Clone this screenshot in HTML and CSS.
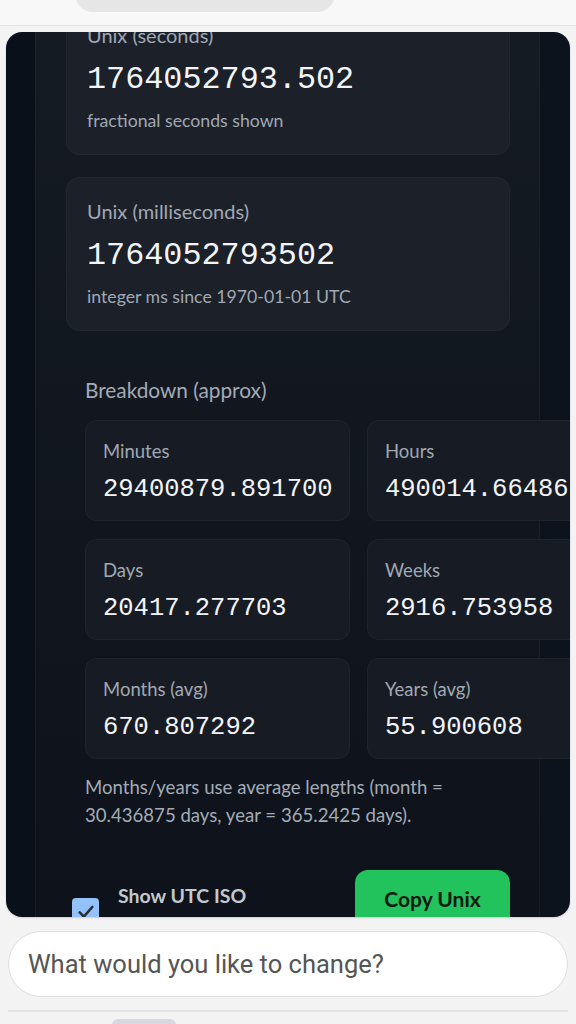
FILE: index.html
```html
<!DOCTYPE html>
<html lang="en">
<head>
<meta charset="utf-8">
<meta name="viewport" content="width=576">
<title>Unix time</title>
<link rel="stylesheet" href="styles.css">
</head>
<body>
<header class="topbar"><div class="topbar-pill"></div></header>
<main class="stage">
  <div class="frame">
    <div class="panel">
      <div class="scroll">
        <section class="card first">
          <div class="card-label">Unix (seconds)</div>
          <div class="card-value">1764052793.502</div>
          <div class="card-sub">fractional seconds shown</div>
        </section>
        <section class="card">
          <div class="card-label">Unix (milliseconds)</div>
          <div class="card-value">1764052793502</div>
          <div class="card-sub">integer ms since 1970-01-01 UTC</div>
        </section>
        <section class="breakdown">
          <h2 class="breakdown-title">Breakdown (approx)</h2>
          <div class="grid">
            <div class="stat"><div class="stat-label">Minutes</div><div class="stat-value">29400879.891700</div></div>
            <div class="stat"><div class="stat-label">Hours</div><div class="stat-value">490014.664862</div></div>
            <div class="stat"><div class="stat-label">Days</div><div class="stat-value">20417.277703</div></div>
            <div class="stat"><div class="stat-label">Weeks</div><div class="stat-value">2916.753958</div></div>
            <div class="stat"><div class="stat-label">Months (avg)</div><div class="stat-value">670.807292</div></div>
            <div class="stat"><div class="stat-label">Years (avg)</div><div class="stat-value">55.900608</div></div>
          </div>
          <p class="note">Months/years use average lengths (month = 30.436875 days, year = 365.2425 days).</p>
        </section>
        <div class="actions">
          <label class="toggle">
            <span class="checkbox"><svg viewBox="0 0 24 24" width="20" height="20"><path d="M4.5 12.5l5 5L19.5 6" fill="none" stroke="#2b2f36" stroke-width="3.2" stroke-linecap="round" stroke-linejoin="round"/></svg></span>
            <span class="toggle-text">Show UTC ISO</span>
          </label>
          <button class="copy-btn">Copy Unix (s)</button>
        </div>
      </div>
    </div>
  </div>
</main>
<footer class="composer">
  <div class="composer-input">What would you like to change?</div>
  <div class="composer-bar"><div class="composer-pill"></div></div>
</footer>
</body>
</html>
```
FILE: styles.css
```css
* { box-sizing: border-box; }
html, body { margin: 0; padding: 0; }
body {
  width: 576px;
  height: 1024px;
  overflow: hidden;
  background: #f3f3f3;
  font-family: "Lato", "Noto Sans", sans-serif;
  display: flex;
  flex-direction: column;
}
.topbar {
  height: 26px;
  background: #f8f8f8;
  border-bottom: 1px solid #e4e4e4;
  position: relative;
  overflow: hidden;
  flex: none;
}
.topbar-pill {
  position: absolute;
  left: 75px;
  top: -30px;
  width: 260px;
  height: 42px;
  border-radius: 18px;
  background: #e6e6e6;
}
.stage {
  padding: 6px 6px 0;
  flex: none;
}
.frame {
  height: 885px;
  border-radius: 16px;
  overflow: hidden;
  background: linear-gradient(90deg, #0a1019 0%, #0d131c 100%);
  box-shadow: 0 1px 2px rgba(0,0,0,0.15);
}
.panel {
  margin-left: 29px;
  width: 505px;
  height: 100%;
  background: linear-gradient(180deg, #151b23 0%, #11161e 60%, #0e131b 100%);
  border-left: 1px solid rgba(255,255,255,0.045);
  border-right: 1px solid rgba(255,255,255,0.045);
}
.scroll {
  padding: 0 29px 0 30px;
  display: flex;
  flex-direction: column;
  gap: 22px;
}
.card {
  background: #1b2029;
  border: 1px solid rgba(255,255,255,0.035);
  border-radius: 14px;
  padding: 20px 20px 21px;
  height: 154px;
}
.card.first { margin-top: -31px; }
.card-label {
  font-size: 20px;
  line-height: 26px;
  color: #a0a8b4;
}
.card-value {
  margin-top: 12px;
  font-family: "Liberation Mono", "DejaVu Sans Mono", monospace;
  font-size: 31.8px;
  line-height: 40px;
  color: #f2f4f7;
}
.card-sub {
  margin-top: 9px;
  font-size: 17.7px;
  line-height: 24px;
  color: #a0a8b4;
}
.breakdown {
  padding: 24px 0 19px 19px;
}
.breakdown-title {
  margin: 0;
  font-weight: 400;
  font-size: 20.8px;
  line-height: 26px;
  color: #a3abb7;
}
.grid {
  margin-top: 17px;
  display: grid;
  grid-template-columns: 265px 265px;
  column-gap: 17px;
  row-gap: 18px;
}
.stat {
  height: 101px;
  background: #171c24;
  border: 1px solid rgba(255,255,255,0.035);
  border-radius: 12px;
  padding: 17px 17px 0;
}
.stat-label {
  font-size: 18.5px;
  line-height: 26px;
  color: #a0a8b4;
}
.stat-value {
  margin-top: 8px;
  font-family: "Liberation Mono", "DejaVu Sans Mono", monospace;
  font-size: 25.5px;
  line-height: 36px;
  color: #f2f4f7;
  white-space: nowrap;
}
.note {
  margin: 14px 0 0;
  font-size: 18.6px;
  line-height: 28px;
  color: #a3abb7;
  max-width: 385px;
}
.actions {
  display: flex;
  justify-content: space-between;
  align-items: flex-start;
}
.toggle {
  display: flex;
  align-items: flex-start;
  gap: 19px;
  padding-left: 6px;
  padding-top: 13px;
}
.checkbox {
  margin-top: 15px;
  width: 27px;
  height: 27px;
  border-radius: 4px;
  background: #93c1fa;
  display: flex;
  align-items: center;
  justify-content: center;
}
.toggle-text {
  font-size: 19.5px;
  line-height: 26px;
  font-weight: 700;
  color: #c2c8d0;
}
.copy-btn {
  width: 155px;
  height: 80px;
  border: none;
  border-radius: 13px;
  background: #22c35c;
  color: #0c1a10;
  font-family: "Lato", "Noto Sans", sans-serif;
  font-weight: 700;
  font-size: 21px;
  line-height: 30px;
  padding: 14px 20px;
  text-align: center;
}
.composer {
  flex: none;
  padding: 14px 8px 0;
}
.composer-input {
  height: 66px;
  border-radius: 33px;
  background: #fff;
  border: 1px solid #dedede;
  padding: 0 19px;
  display: flex;
  align-items: center;
  font-family: "Roboto", sans-serif;
  font-size: 25.5px;
  color: #555555;
}
.composer-bar {
  margin-top: 13px;
  border-top: 2px solid #e3e3e3;
  height: 20px;
  position: relative;
}
.composer-pill {
  position: absolute;
  left: 104px;
  top: 7px;
  width: 64px;
  height: 20px;
  border-radius: 6px;
  background: #d8d8de;
}
```
